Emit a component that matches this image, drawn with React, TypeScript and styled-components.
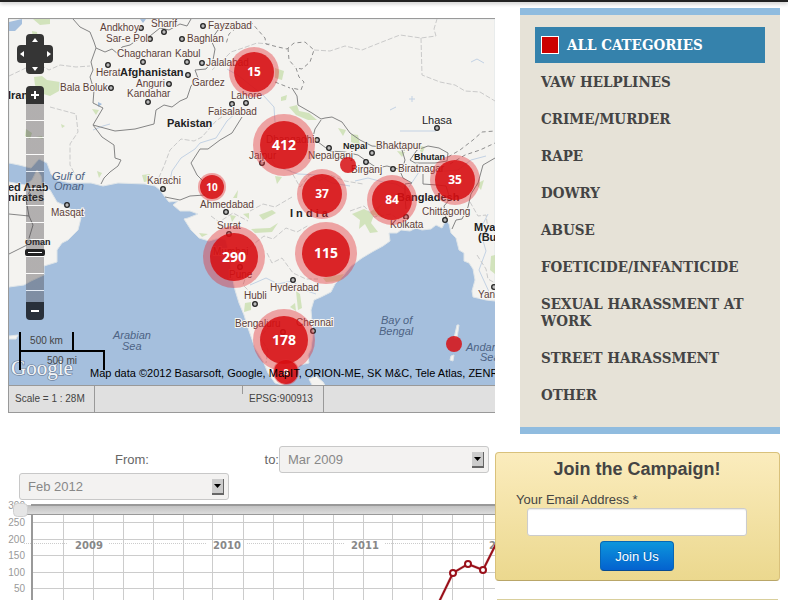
import React from "react";
import styled, { createGlobalStyle } from "styled-components";

const sans = '"Liberation Sans", Arial, sans-serif';

const GlobalStyle = createGlobalStyle`
  *, *::before, *::after { box-sizing: border-box; }
  body { margin: 0; background: #fff; color: #444; font: 13px/17px ${sans}; overflow-x: hidden; }
  button, input, select { font-family: inherit; }
`;

const TopBar = styled.header`
  height: 2px;
  background: #222;
  box-shadow: 0 1px 4px rgba(0, 0, 0, 0.4);
`;

const Page = styled.main`
  display: grid;
  grid-template-columns: minmax(0, 1fr) 285px;
  padding: 6px 8px 0;
`;

const Content = styled.div`
  min-width: 0;
  padding-top: 10px;
`;

/* Map */

const MapFrame = styled.section`
  border: solid #999;
  border-width: 1px 0 1px 1px;
`;

const MapView = styled.div`
  position: relative;
  height: 366px;
  overflow: hidden;
`;

const MapDrawing = styled.svg`
  display: block;
  width: 100%;
  height: 100%;
`;

const MapControls = styled.div`
  position: absolute;
  left: 8px;
  top: 15px;
  width: 36px;
  display: flex;
  flex-direction: column;
  align-items: center;
`;

const PanPad = styled.div`
  display: grid;
  grid-template-columns: 9px 18px 9px;
  grid-template-rows: 11px 18px 11px;
  grid-template-areas: ". up ." "left mid right" ". down .";
  margin-bottom: 12px;
`;

const PanHub = styled.span`
  grid-area: mid;
  background: #353535;
`;

const PanButton = styled.button<{ $area: string; $radius: string }>`
  grid-area: ${(p) => p.$area};
  display: grid;
  place-items: center;
  padding: 0;
  border: 0;
  border-radius: ${(p) => p.$radius};
  background: #353535;
`;

const ZoomButton = styled.button<{ $end?: boolean }>`
  display: grid;
  place-items: center;
  width: 18px;
  height: 18px;
  padding: 0;
  border: 0;
  border-radius: ${(p) => (p.$end ? "0 0 4px 4px" : "4px 4px 0 0")};
  background: ${(p) => (p.$end ? "#29303a" : "#333")};
`;

const ZoomTrack = styled.div`
  position: relative;
  width: 18px;
  height: 198px;
  background: repeating-linear-gradient(rgba(60, 55, 60, 0.36) 0 16px, rgba(255, 255, 255, 0.7) 16px 17px);
`;

const ZoomThumb = styled.span`
  position: absolute;
  left: -1px;
  top: 145px;
  width: 20px;
  height: 7px;
  border: solid #222;
  border-width: 3px;
  border-radius: 2px;
  background: #fff;
`;

const ScaleLines = styled.div`
  position: absolute;
  left: 10px;
  bottom: 15px;
  width: 86px;
  color: #444;
  font-size: 10px;
  line-height: 17px;
  text-align: center;
`;

const ScaleTop = styled.div`
  width: 55px;
  height: 18px;
  border: solid #000;
  border-width: 0 2px;
`;

const ScaleBottom = styled.div`
  height: 20px;
  border: solid #000;
  border-width: 2px 2px 0;
`;

const Attribution = styled.p`
  position: absolute;
  left: 81px;
  right: 0;
  bottom: 4px;
  margin: 0;
  overflow: hidden;
  white-space: nowrap;
  color: #000;
  font-size: 11px;
  line-height: 15px;
`;

const StatusBar = styled.div`
  display: flex;
  height: 27px;
  border-top: 1px solid #999;
  background: #e0e0e0;
  font-size: 10px;
  line-height: 26px;
  white-space: nowrap;
`;

const StatusCell = styled.span<{ $width: number; $line?: boolean }>`
  width: ${(p) => p.$width}px;
  padding: 0 6px;
  border-right: ${(p) => (p.$line ? "1px solid #999" : "0")};
`;

const StatusTick = styled.span`
  width: 1px;
  height: 8px;
  background: #999;
`;

/* Date range */

const DateRange = styled.form`
  display: grid;
  grid-template-columns: 210px minmax(0, 1fr) 210px;
  margin: 33px 6px 0 11px;
  color: #666;
`;

const DateLabel = styled.label<{ $end?: boolean }>`
  align-self: center;
  padding-left: ${(p) => (p.$end ? "0" : "16px")};
  text-align: ${(p) => (p.$end ? "right" : "center")};
  line-height: 27px;
`;

const SelectWrap = styled.span`
  position: relative;
  display: block;
  height: 27px;
`;

const DateSelect = styled.select`
  appearance: none;
  width: 100%;
  height: 100%;
  padding: 0 8px;
  border: 1px solid #c8c8c8;
  border-radius: 3px;
  background: #f3f2f1;
  color: #888;
  font-size: 13px;
`;

const SelectArrow = styled.span`
  position: absolute;
  right: 5px;
  top: 6px;
  display: grid;
  place-items: center;
  width: 12px;
  height: 16px;
  border: solid #666;
  border-width: 0 1px 2px 0;
  background: #ccc;
  pointer-events: none;
`;

const ChartArea = styled.div`
  height: 100px;
  overflow: hidden;
`;

/* Side column */

const Side = styled.aside`
  display: flex;
  flex-direction: column;
`;

const Categories = styled.nav`
  margin-left: 25px;
  padding: 12px 15px 13px;
  border: solid #90bcdf;
  border-width: 7px 0;
  background: #e6e2d7;
`;

const CategoryList = styled.ul`
  margin: 0;
  padding: 0;
  list-style: none;
`;

const CategoryLink = styled.a<{ $active?: boolean }>`
  display: flex;
  align-items: center;
  gap: 8px;
  min-height: ${(p) => (p.$active ? 36 : 37)}px;
  margin-bottom: ${(p) => (p.$active ? 1 : 0)}px;
  padding: ${(p) => (p.$active ? "0 6px" : "10px 6px")};
  background: ${(p) => (p.$active ? "#3582ac" : "transparent")};
  color: ${(p) => (p.$active ? "#fff" : "#444")};
  font: bold 15px/17px "DejaVu Serif Condensed", "DejaVu Serif", serif;
  text-decoration: none;
  text-transform: uppercase;
`;

const Swatch = styled.span`
  width: 18px;
  height: 18px;
  border: 1px solid #fff;
  background: #c00;
`;

const Campaign = styled.form`
  display: flex;
  flex-direction: column;
  align-items: center;
  height: 129px;
  margin-top: 18px;
  padding: 5px 21px 0 20px;
  border: 1px solid #d9c17b;
  border-bottom-color: #b9a668;
  border-radius: 4px;
  background: linear-gradient(#fbecbd, #ebd88e);
`;

const CampaignTitle = styled.h2`
  margin: 0 0 12px;
  font-size: 18px;
  line-height: 22px;
`;

const EmailLabel = styled.label`
  align-self: flex-start;
  line-height: 16px;
`;

const EmailInput = styled.input`
  width: 220px;
  height: 28px;
  border: 1px solid #ccc;
  border-radius: 3px;
  background: #fff;
  box-shadow: inset 0 1px 1px rgba(0, 0, 0, 0.08);
`;

const JoinButton = styled.button`
  width: 74px;
  height: 30px;
  margin-top: 5px;
  border: 1px solid #0767b5;
  border-bottom-color: #064a91;
  border-radius: 4px;
  background: linear-gradient(#0c96dc, #0462cf);
  color: #fff;
  font-size: 13px;
  text-shadow: 0 -1px 0 rgba(0, 0, 0, 0.25);
`;

const NextPanel = styled.div`
  height: 1px;
  margin: 18px 2px 0;
  background: #d9cf9c;
`;

type Point = [number, number];

type Place = { name: string; x: number; y: number; dot?: Point };

const cities: Place[] = [
  { name: "Andkhoy", x: 100, y: 31, dot: [141, 28] },
  { name: "Sharif", x: 151, y: 27, dot: [164, 32] },
  { name: "Fayzabad", x: 208, y: 29, dot: [203, 26] },
  { name: "Sar-e Pol", x: 106, y: 42, dot: [150, 39] },
  { name: "Baghlan", x: 187, y: 42, dot: [182, 39] },
  { name: "Chagcharan", x: 117, y: 57, dot: [143, 62] },
  { name: "Kabul", x: 175, y: 57, dot: [187, 62] },
  { name: "Jalalabad", x: 206, y: 66, dot: [202, 63] },
  { name: "Herat", x: 96, y: 76, dot: [108, 65] },
  { name: "Gardez", x: 192, y: 86, dot: [188, 75] },
  { name: "Anguri", x: 136, y: 87, dot: [169, 84] },
  { name: "Bala Boluk", x: 60, y: 91, dot: [111, 88] },
  { name: "Kandahar", x: 127, y: 97, dot: [148, 102] },
  { name: "Lahore", x: 231, y: 99, dot: [246, 103] },
  { name: "Faisalabad", x: 208, y: 115, dot: [232, 104] },
  { name: "Karachi", x: 147, y: 184, dot: [163, 189] },
  { name: "Masqat", x: 51, y: 216, dot: [67, 205] },
  { name: "Dhangadhi", x: 266, y: 143, dot: [317, 140] },
  { name: "Jaipur", x: 249, y: 159, dot: [262, 163] },
  { name: "Nepalganj", x: 308, y: 159, dot: [329, 148] },
  { name: "Bhaktapur", x: 376, y: 149, dot: [372, 153] },
  { name: "Birganj", x: 351, y: 173, dot: [366, 162] },
  { name: "Biratnagar", x: 398, y: 172, dot: [393, 169] },
  { name: "Ahmedabad", x: 200, y: 208, dot: [226, 212] },
  { name: "Surat", x: 217, y: 229, dot: [229, 234] },
  { name: "Mumbai", x: 213, y: 255 },
  { name: "Pune", x: 229, y: 278, dot: [240, 267] },
  { name: "Hyderabad", x: 270, y: 291, dot: [293, 280] },
  { name: "Hubli", x: 244, y: 299, dot: [255, 304] },
  { name: "Bengaluru", x: 235, y: 327, dot: [283, 332] },
  { name: "Chennai", x: 296, y: 326, dot: [313, 331] },
  { name: "Kolkata", x: 390, y: 228, dot: [406, 217] },
  { name: "Chittagong", x: 422, y: 215, dot: [445, 220] },
  { name: "Yangon", x: 478, y: 298, dot: [494, 287] },
];

const countries = [
  { name: "Afghanistan", x: 120, y: 76, size: 11 },
  { name: "Pakistan", x: 167, y: 127, size: 11 },
  { name: "Iran", x: 8, y: 99, size: 11 },
  { name: "ed Arab", x: 8, y: 191, size: 11 },
  { name: "nirates", x: 8, y: 201, size: 11 },
  { name: "Oman", x: 25, y: 245, size: 9 },
  { name: "Nepal", x: 343, y: 149, size: 9 },
  { name: "Bhutan", x: 414, y: 160, size: 9 },
  { name: "Bangladesh", x: 397, y: 201, size: 11 },
  { name: "I n d i a", x: 290, y: 217, size: 11 },
  { name: "Myanmar", x: 474, y: 231, size: 11 },
  { name: "(Burma)", x: 478, y: 241, size: 11 },
];

const seas = [
  { name: "Gulf of", x: 52, y: 180 },
  { name: "Oman", x: 54, y: 190 },
  { name: "Arabian", x: 113, y: 339 },
  { name: "Sea", x: 122, y: 350 },
  { name: "Bay of", x: 381, y: 324 },
  { name: "Bengal", x: 379, y: 335 },
  { name: "Andaman", x: 466, y: 351 },
  { name: "Sea", x: 480, y: 361 },
];

const clusters = [
  { x: 254, y: 72, outer: 25, inner: 20, count: "15", size: 12 },
  { x: 284, y: 145, outer: 31, inner: 24, count: "412", size: 14 },
  { x: 322, y: 194, outer: 25, inner: 20, count: "37", size: 12 },
  { x: 392, y: 200, outer: 25, inner: 20, count: "84", size: 12 },
  { x: 455, y: 180, outer: 25, inner: 20, count: "35", size: 12 },
  { x: 212, y: 187, outer: 14, inner: 12, count: "10", size: 10 },
  { x: 234, y: 257, outer: 31, inner: 24, count: "290", size: 14 },
  { x: 326, y: 253, outer: 31, inner: 24, count: "115", size: 14 },
  { x: 284, y: 340, outer: 31, inner: 24, count: "178", size: 14 },
  { x: 286, y: 372, outer: 13, inner: 12, count: "8", size: 9 },
  { x: 348, y: 165, outer: 8, inner: 8, count: "", size: 9 },
  { x: 454, y: 344, outer: 8, inner: 8, count: "", size: 9 },
];

const landPath = [
  "M9 19H495V301L486 300L473 297L472 291L475 280L473 269L469 263L464 261L464 253L459 250L456 238L451 233L449 224L446 220L442 228L436 225L431 229L422 230L416 228L410 231L401 230L397 233L389 233L390 241L383 246L372 252L362 258L351 266L343 276L335 284L331 292L321 297L314 300L311 310L312 322L313 334L311 349L308 355L309 363L300 365L294 371L290 380L282 385L275 383L268 373L263 361L255 348L248 328L244 315L239 303L235 290L231 270L229 254L226 240L219 238L209 241L199 238L191 230L184 219L188 218L198 214L190 211L180 211L173 205L178 201L169 202L165 197L160 190L155 186L145 184L118 183L103 186L91 183L70 183L57 180L51 174L47 163L39 159L31 168L19 165L9 163Z",
  "M9 182L25 185L32 180L37 170L41 176L42 185L50 190L57 202L68 207L81 218L78 230L68 240L62 243L57 250L57 262L44 266L44 275L31 281L24 285L9 287Z",
  "M309 379L316 376L323 382L326 387H313Z",
  "M9 336L18 335L16 339L9 339Z",
  "M457 325L459 325L457 338L454 338ZM451 356L454 355L453 361L450 360Z",
].join("");

const waterPath = "M9 22L22 19V24L15 31H9ZM98 102L102 104L98 107ZM140 19H146L143 23Z";

const parkPath = [
  "M33 19L50 19L50 24L40 25ZM32 31L37 32L38 40L33 39ZM34 77L42 76L47 80L60 82L59 91L50 96L40 93L35 85ZM92 109L99 110L96 115ZM26 129L32 133L30 139L25 136ZM61 124L65 126L62 128ZM97 171L102 173L99 178ZM142 175L150 174L149 181L144 182ZM36 137L42 136L43 139Z",
  "M275 68L284 71L282 80L275 78ZM281 97L287 95L286 100L281 101ZM289 107L297 105L299 111L309 113L317 120L308 120L296 115ZM338 128L346 130L343 136ZM351 134L358 135L360 145L351 142ZM397 151L405 152L402 157ZM417 145L425 147L422 154ZM275 176L282 177L277 184Z",
  "M352 214L364 209L370 212L383 203L378 210L384 218L374 215L371 223L378 232L370 233L365 224L359 229L360 220ZM251 229L270 228L278 223L272 232L255 233ZM259 215L272 210L276 213L263 220ZM323 278L344 274L340 281L326 282ZM296 291L300 294L302 308L298 310ZM290 307L295 303L296 311ZM245 303L251 302L251 310L244 312ZM230 215L236 216L232 222ZM199 233L208 234L202 237ZM243 214L249 213L249 219ZM491 256L495 255V274L490 270ZM476 184L484 180L481 190ZM233 198L238 190L237 198Z",
].join("");

const borders = [
  "73,19 80,27 90,32 94,42 96,48 91,62 93,70 90,77 94,90 93,103 103,108 93,125 115,131 135,129 154,124 156,110 164,105 172,107 180,101 187,98 191,86 198,78 195,70 206,69 213,60 215,49 211,40 218,30 226,25 238,29 250,24",
  "93,125 102,137 114,145 115,158 121,160 118,166 110,172 104,178 101,184",
  "96,48 105,52 112,49 118,54 122,47 130,45 140,38 150,36 160,28 169,30 180,24 187,26 191,19",
  "242,117 232,133 220,140 208,149 200,149 191,163 197,175 203,181",
  "165,197 180,200 190,196 205,195",
  "292,88 297,96 298,105 312,113 321,119 325,118 332,117 342,122 350,133 360,140 372,146 395,148 405,150",
  "321,120 315,129 313,137 318,142 330,151 345,152 358,155 368,162 377,168 387,166 402,170 405,160 402,150",
  "410,160 417,150 428,146 439,148 448,153 447,161 435,163 415,163 410,160",
  "400,171 403,178 412,183 405,184 405,197 406,209",
  "423,174 423,184 437,185 446,186 450,199 444,206 446,218",
  "495,158 483,165 478,183 471,194 468,207 462,219 456,220 452,229",
  "9,214 29,216 33,225 27,245 9,254",
  "29,216 26,200 31,188",
];

const dashedBorders = [
  "250,21 265,38 266,44 278,47 287,49 294,43 305,42 314,50 310,62 302,69 296,68 299,77 304,82 301,90 292,88",
  "288,48 289,60 295,67",
  "275,82 290,88",
  "236,28 229,34 226,44",
  "448,157 460,150 473,140 482,132 495,131",
  "450,164 465,155 480,150 495,143",
];

const fineBorders = [
  "314,50 330,51 345,46 362,50 382,42 400,35 421,38 436,36 434,29 437,19",
  "421,38 422,75 440,82 455,85 465,91 480,92 495,101",
  "9,76 28,67 37,63 49,70 60,65 76,67 90,66",
  "50,107 76,114 78,132 70,144 70,165 77,178",
  "156,184 164,166 170,150 181,139 194,141 202,137 216,121 229,112",
  "270,44 257,43 243,48 231,52 222,61 212,70",
  "281,168 291,171 300,187 310,174 319,181 330,175 345,181 363,184",
  "250,211 263,204 275,207 292,197",
  "250,247 264,236 273,239 286,228 297,232 309,225",
  "267,253 272,263 282,258 293,273 306,279 318,279",
  "350,211 364,206 374,217 391,214 399,220",
  "267,319 270,326 260,337 268,350 266,363",
  "470,202 478,216 486,215 488,229",
  "477,255 486,269 488,279 495,283",
  "211,216 219,222 233,213 248,221",
  "247,273 243,285 249,291 249,300",
];

const rivers = [
  "93,130 103,126 110,124",
  "169,185 172,171 181,158 195,149 200,143 216,138 227,121 238,111",
  "227,69 239,76 249,84 263,95 274,107 275,122",
  "265,150 276,166 298,174 318,175 332,183 350,186",
  "355,181 368,178 383,182 396,184 408,191",
  "409,187 419,172 435,172 458,170 471,160 486,156",
  "400,131 436,131",
  "250,285 266,278 278,284 292,281 307,291 316,294",
  "488,214 480,230 486,251 479,270 490,294",
  "409,99 415,99M412,96 412,102M471,62 477,59 484,63M390,110 396,107",
];

function Lines({ items, stroke, dash }: { items: string[]; stroke: string; dash?: string }) {
  return (
    <g fill="none" stroke={stroke} strokeDasharray={dash} strokeLinejoin="round">
      {items.map((d) => (
        <path key={d} d={"M" + d} />
      ))}
    </g>
  );
}

function RegionMap() {
  return (
    <MapDrawing viewBox="9 19 486 366" preserveAspectRatio="xMinYMin slice" role="img" aria-label="Map of reports in South Asia" fontFamily={sans}>
      <rect x="9" y="19" width="486" height="367" fill="#a5bfdd" />
      <path d={landPath} fill="#f4f3f0" stroke="#dfe5e8" />
      <path d={parkPath} fill="#c9dfaf" opacity="0.8" />
      <path d={waterPath} fill="#a5bfdd" />
      <Lines items={rivers} stroke="#c3d2e4" />
      <Lines items={fineBorders} stroke="#cacaca" dash="5 2" />
      <Lines items={borders} stroke="#858585" />
      <Lines items={dashedBorders} stroke="#909090" dash="4 3" />
      <g fill="#bbb" stroke="#222" strokeWidth="1.3">
        {cities.map((c) => c.dot && <circle key={c.name} cx={c.dot[0]} cy={c.dot[1]} r="2.3" />)}
        <circle cx="437" cy="128" r="2.3" />
      </g>
      <g fontSize="10" fill="#5c4039" stroke="#f7f6f3" strokeWidth="2" paintOrder="stroke">
        {cities.map((c) => (
          <text key={c.name} x={c.x} y={c.y}>{c.name}</text>
        ))}
        <text x="422" y="124" fontSize="11" fill="#222">Lhasa</text>
      </g>
      <g fontWeight="bold" fill="#222" stroke="#f7f6f3" strokeWidth="1" paintOrder="stroke">
        {countries.map((c) => (
          <text key={c.name} x={c.x} y={c.y} fontSize={c.size}>{c.name}</text>
        ))}
      </g>
      <g fontSize="11" fontStyle="italic" fill="#4d6384">
        {seas.map((s) => (
          <text key={s.name + s.y} x={s.x} y={s.y}>{s.name}</text>
        ))}
      </g>
      <g fill="#d60c10" textAnchor="middle" fontWeight="bold" fontFamily='"Noto Sans", sans-serif'>
        {clusters.map((c) => (
          <g key={c.x + "-" + c.y}>
            {c.outer > c.inner && <circle cx={c.x} cy={c.y} r={c.outer} fill="#e32a30" opacity="0.4" />}
            <circle cx={c.x} cy={c.y} r={c.inner} opacity="0.84" />
            <text x={c.x} y={c.y + Math.round(c.size * 0.36)} fontSize={c.size} fill="#fff">{c.count}</text>
          </g>
        ))}
      </g>
      <text x="11" y="375" fontFamily='"Liberation Serif", serif' fontSize="21" fill="#f4f6f8" stroke="#7589a3" strokeWidth="1.5" paintOrder="stroke">Google</text>
    </MapDrawing>
  );
}

const panDirections = [
  { area: "up", label: "Pan up", radius: "4px 4px 0 0", points: "0,5 3,1 6,5" },
  { area: "left", label: "Pan left", radius: "4px 0 0 4px", points: "5,0 1,3 5,6" },
  { area: "right", label: "Pan right", radius: "0 4px 4px 0", points: "1,0 5,3 1,6" },
  { area: "down", label: "Pan down", radius: "0 0 4px 4px", points: "0,1 3,5 6,1" },
];

function MapPanel() {
  return (
    <MapFrame>
      <MapView>
        <RegionMap />
        <MapControls>
          <PanPad>
            <PanHub />
            {panDirections.map((d) => (
              <PanButton key={d.area} type="button" aria-label={d.label} $area={d.area} $radius={d.radius}>
                <svg width="6" height="6" viewBox="0 0 6 6"><polygon points={d.points} fill="#fff" /></svg>
              </PanButton>
            ))}
          </PanPad>
          <ZoomButton type="button" aria-label="Zoom in">
            <svg width="8" height="8" viewBox="0 0 8 8"><path d="M0 4H8M4 0V8" stroke="#fff" strokeWidth="2" /></svg>
          </ZoomButton>
          <ZoomTrack><ZoomThumb /></ZoomTrack>
          <ZoomButton type="button" aria-label="Zoom out" $end>
            <svg width="8" height="8" viewBox="0 0 8 8"><path d="M0 4H8" stroke="#fff" strokeWidth="2" /></svg>
          </ZoomButton>
        </MapControls>
        <ScaleLines>
          <ScaleTop>500 km</ScaleTop>
          <ScaleBottom>500 mi</ScaleBottom>
        </ScaleLines>
        <Attribution>Map data ©2012 Basarsoft, Google, MapIT, ORION-ME, SK M&amp;C, Tele Atlas, ZENRIN</Attribution>
      </MapView>
      <StatusBar>
        <StatusCell $width={86} $line>Scale = 1 : 28M</StatusCell>
        <StatusCell $width={147} />
        <StatusTick />
        <StatusCell $width={81} $line>EPSG:900913</StatusCell>
      </StatusBar>
    </MapFrame>
  );
}

function DatePicker({ id, value }: { id: string; value: string }) {
  return (
    <SelectWrap>
      <DateSelect id={id} defaultValue={value}>
        <option>{value}</option>
      </DateSelect>
      <SelectArrow>
        <svg width="7" height="4" viewBox="0 0 7 4"><polygon points="0,0 7,0 3.5,4" fill="#000" /></svg>
      </SelectArrow>
    </SelectWrap>
  );
}

const gridColumns = [63, 93, 123, 153, 183, 212, 243, 273, 303, 333, 363, 392, 422, 452, 483];
const gridRows = [
  { label: "300", y: 505 },
  { label: "250", y: 522 },
  { label: "200", y: 539 },
  { label: "150", y: 555 },
  { label: "100", y: 572 },
  { label: "50", y: 588 },
];
const years = [
  { label: "2009", x: 89 },
  { label: "2010", x: 227 },
  { label: "2011", x: 365 },
  { label: "2012", x: 503 },
];
const readings: Point[] = [[453, 573], [468, 564], [483, 570]];

function ReportsChart() {
  return (
    <ChartArea>
      <svg width="100%" height="100%" viewBox="8 500 487 100" preserveAspectRatio="xMinYMin slice" role="img" aria-label="Reports over time">
        <defs>
          <linearGradient id="track" x1="0" y1="0" x2="0" y2="1">
            <stop offset="0" stopColor="#bfbfbf" />
            <stop offset="1" stopColor="#dcdcdc" />
          </linearGradient>
        </defs>
        <g stroke="#ccc">
          {gridColumns.map((x) => <path key={x} d={`M${x + 0.5} 505V600`} />)}
          {gridRows.map((r) => <path key={r.y} d={`M33 ${r.y + 0.5}H495`} />)}
        </g>
        <path d="M24 543.5H68M109 543.5H206M247 543.5H344M385 543.5H482" stroke="#ccc" strokeDasharray="1 1" />
        <g fontFamily={sans} fontSize="10" fill="#999" textAnchor="end">
          {gridRows.map((r) => <text key={r.label} x="25" y={r.y + 4}>{r.label}</text>)}
        </g>
        <g fontFamily='"DejaVu Sans", sans-serif' fontWeight="bold" fontSize="10" fill="#888" textAnchor="middle">
          {years.map((y) => <text key={y.label} x={y.x} y="549">{y.label}</text>)}
        </g>
        <path d="M32 505V600" stroke="#999" strokeWidth="2" />
        <rect x="20" y="505" width="475" height="9" fill="url(#track)" />
        <path d="M31 505H495" stroke="#999" strokeWidth="2" />
        <path d="M27 514.5H495" stroke="#999" />
        <rect x="13.5" y="503.5" width="14" height="13" rx="4" fill="#e6e6e6" stroke="#d0d0d0" />
        <path d="M438 604L453 573L468 564L483 570L498 540" fill="none" stroke="#d8a9a9" strokeWidth="3" opacity="0.5" />
        <path d="M438 604L453 573L468 564L483 570L498 540" fill="none" stroke="#990f19" strokeWidth="2" />
        {readings.map(([x, y]) => <circle key={x} cx={x} cy={y} r="3" fill="#fff" stroke="#990f19" strokeWidth="2" />)}
      </svg>
    </ChartArea>
  );
}

const categories = [
  "VAW Helplines",
  "Crime/Murder",
  "Rape",
  "Dowry",
  "Abuse",
  "Foeticide/Infanticide",
  "Sexual Harassment at Work",
  "Street Harassment",
  "Other",
];

export default function App() {
  return (
    <>
      <GlobalStyle />
      <TopBar />
      <Page>
        <Content>
          <MapPanel />
          <DateRange>
            <DateLabel htmlFor="date-from">From:</DateLabel>
            <DateLabel htmlFor="date-to" $end>to:</DateLabel>
            <DatePicker id="date-to" value="Mar 2009" />
            <DatePicker id="date-from" value="Feb 2012" />
          </DateRange>
          <ReportsChart />
        </Content>
        <Side>
          <Categories aria-label="Categories">
            <CategoryList>
              <li>
                <CategoryLink href="#all" $active><Swatch />All Categories</CategoryLink>
              </li>
              {categories.map((name) => (
                <li key={name}><CategoryLink href="#category">{name}</CategoryLink></li>
              ))}
            </CategoryList>
          </Categories>
          <Campaign>
            <CampaignTitle>Join the Campaign!</CampaignTitle>
            <EmailLabel htmlFor="email">Your Email Address *</EmailLabel>
            <EmailInput id="email" type="email" />
            <JoinButton type="button">Join Us</JoinButton>
          </Campaign>
          <NextPanel />
        </Side>
      </Page>
    </>
  );
}
